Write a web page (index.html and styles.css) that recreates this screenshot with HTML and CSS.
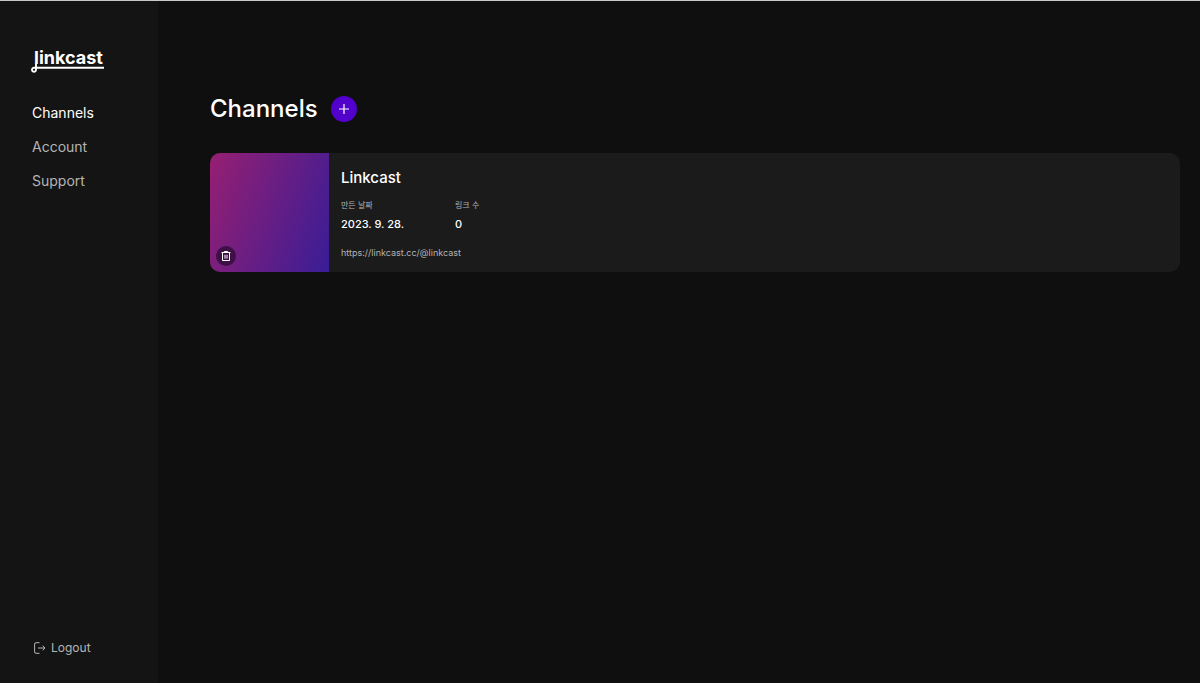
FILE: index.html
```html
<!DOCTYPE html>
<html lang="ko">
<head>
    <meta charset="UTF-8">
    <meta name="viewport" content="width=device-width, initial-scale=1.0">
    <title>Linkcast</title>
    <link rel="stylesheet" href="styles.css">
</head>
<body>
    <aside class="sidebar">
        <a class="logo" href="#" aria-label="linkcast">
            <svg width="76" height="26" viewBox="0 0 76 26">
                <text x="4" y="16" class="logo-text">linkcast</text>
                <path d="M6 15V21.500A2 2 0 1 1 4 19.800H74" fill="none" stroke="#fff" stroke-width="1.900"/>
            </svg>
        </a>
        <nav class="menu">
            <a href="#" class="active">Channels</a>
            <a href="#">Account</a>
            <a href="#">Support</a>
        </nav>
        <button class="logout">
            <svg width="12" height="12" viewBox="0 0 12 12" fill="none" stroke="#b4b4b4">
                <path d="M5.500 .7H2Q.6 .7 .6 2V10Q.6 11.300 2 11.300H5.500M4 6H11M8.700 3.700L11 6L8.700 8.300"/>
            </svg>
            Logout
        </button>
    </aside>

    <main class="content">
        <div class="title">
            <h1>Channels</h1>
            <button class="add" aria-label="Add channel">
                <svg width="12" height="12" viewBox="0 0 12 12" stroke="#fff" stroke-width="1.200">
                    <path d="M6 1V11M1 6H11"/>
                </svg>
            </button>
        </div>

        <article class="card">
            <div class="cover">
                <button class="delete" aria-label="Delete channel">
                    <svg width="10" height="10" viewBox="0 0 10 10" fill="none" stroke="#fff">
                        <path d="M.5 1.500H9.500M3.300 1.500V.5H6.700V1.500M1.500 2V9.500H8.500V2M4 3.800V7.700M6 3.800V7.700"/>
                    </svg>
                </button>
            </div>
            <div class="info">
                <h2>Linkcast</h2>
                <dl>
                    <div class="col">
                        <dt>만든 날짜</dt>
                        <dd>2023. 9. 28.</dd>
                    </div>
                    <div class="col">
                        <dt>링크 수</dt>
                        <dd>0</dd>
                    </div>
                </dl>
                <a class="link" href="#">https://linkcast.cc/@linkcast</a>
            </div>
        </article>
    </main>
</body>
</html>
```
FILE: styles.css
```css
*{
    box-sizing: border-box;
    margin: 0;
    padding: 0;
}
body{
    display: flex;
    min-height: 100vh;
    border-top: 1px solid #c8cac9;
    background: #0f0f0f;
    color: #fff;
    font-family: Inter, "Noto Sans CJK KR", sans-serif;
}
a{
    color: inherit;
    text-decoration: none;
}
button{
    border: 0;
    color: inherit;
    font-family: inherit;
    cursor: pointer;
}
svg{
    display: block;
}
.sidebar{
    display: flex;
    flex-direction: column;
    align-items: flex-start;
    width: 158px;
    padding: 47px 30px 25px;
    background: #141414;
}
.logo-text{
    fill: #fff;
    font-family: Inter, sans-serif;
    font-size: 18px;
    font-weight: 700;
}
.menu{
    display: flex;
    flex-direction: column;
    gap: 14px;
    margin-top: 29px;
    padding-left: 2px;
    color: #b4b4b4;
    font-size: 14px;
    line-height: 20px;
}
.menu .active{
    color: #fff;
}
.logout{
    display: flex;
    align-items: center;
    gap: 5px;
    margin-top: auto;
    padding-left: 4px;
    background: none;
    color: #b4b4b4;
    font-size: 12px;
    line-height: 20px;
}
.content{
    flex: 1;
    padding: 92px 20px 20px 52px;
}
.title{
    display: flex;
    align-items: center;
    gap: 13px;
}
.title h1{
    font-size: 24px;
    font-weight: 500;
    line-height: 32px;
}
.add{
    display: grid;
    place-items: center;
    width: 26px;
    height: 26px;
    border-radius: 50%;
    background: #5200cc;
}
.card{
    display: flex;
    margin-top: 28px;
    border-radius: 10px;
    background: #1b1b1b;
    overflow: hidden;
}
.cover{
    display: flex;
    align-items: flex-end;
    width: 119px;
    min-height: 119px;
    padding: 6px;
    background: linear-gradient(110deg, #961f72, #391d96);
}
.delete{
    display: grid;
    place-items: center;
    width: 20px;
    height: 20px;
    border-radius: 50%;
    background: #3d1145;
}
.info{
    padding: 15px 12px 12px;
}
.info h2{
    font-size: 15px;
    font-weight: 500;
    line-height: 20px;
}
.info dl{
    display: flex;
    margin-top: 10px;
}
.col{
    width: 114px;
}
.info dt{
    color: #b4b4b4;
    font-size: 8px;
    line-height: 14px;
}
.info dd{
    margin-top: 4px;
    font-size: 11px;
    font-weight: 500;
    line-height: 16px;
}
.link{
    display: block;
    margin-top: 14px;
    color: #b4b4b4;
    font-size: 9px;
    line-height: 14px;
}
```
